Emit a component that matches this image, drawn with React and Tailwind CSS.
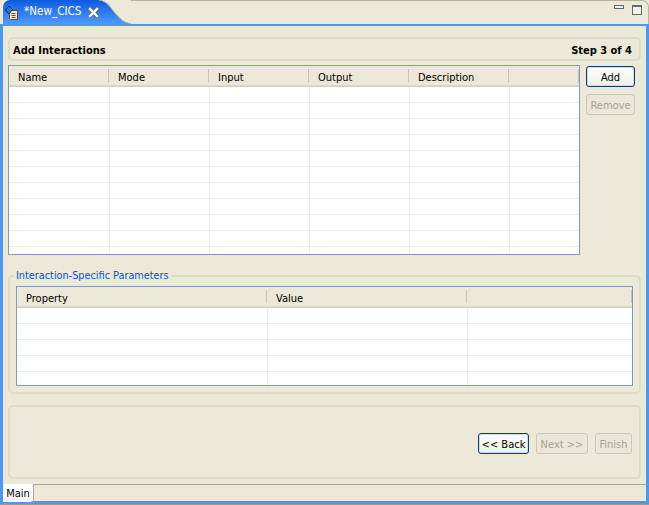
import React from "react";

const font = { fontFamily: '"DejaVu Sans Condensed", "DejaVu Sans", sans-serif' };

const Grid = ({ columns, rows, widths, className, headPad }) => (
  <div className={`flex flex-col overflow-hidden border border-[#7f9db9] bg-white ${className}`}>
    <div className="flex h-[19px] shrink-0 bg-[#ebe8d8]">
      {columns.map((c, i) => (
        <div key={i} className={`relative flex shrink-0 items-center pl-[9px] ${headPad} ${widths[i]}`}>
          {c}
          <span className="absolute right-0 top-[3px] h-[13px] w-px bg-[#c7c5b2]" />
        </div>
      ))}
    </div>
    <div className="h-px shrink-0 bg-[#dcd9c9]" />
    <div className="h-px shrink-0 bg-[#d3d0bf]" />
    {rows.map((r) => (
      <div key={r} className="flex h-[16px] shrink-0 border-b border-[#f1efe2] pl-px">
        {columns.map((c, i) => (
          <div key={i} className={`shrink-0 border-r border-[#f1efe2] ${widths[i]}`} />
        ))}
      </div>
    ))}
  </div>
);

const Btn = ({ children, w, focus, disabled }) => (
  <button
    className={`flex h-[21px] items-center justify-center rounded-[3px] border pt-px ${w} ${
      focus
        ? "border-[#0f3d6e] bg-gradient-to-b from-white to-[#f0efe6] text-black shadow-[inset_0_0_0_1px_#cfdcf0]"
        : ""
    } ${disabled ? "border-[#cac8bb] bg-[#eae7d8] text-[#a5a396]" : ""}`}
  >
    {children}
  </button>
);

const TabIcon = () => (
  <svg width="16" height="17" viewBox="0 0 16 17" className="shrink-0">
    <path d="M4.5 6.5 H12.5 V15.5 H5.5 L4.5 14.5 Z" fill="#f9ecc4" stroke="#6b4a22" />
    <path d="M6.5 9.5 H10.5 M6.5 11.5 H10.5 M6.5 13.5 H10.5" stroke="#6b4a22" />
    <path d="M0.5 6 L4 2 L7.5 5.5 L4 10 Z" fill="#1f7fc4" stroke="#0b2f5a" />
  </svg>
);

const CloseIcon = () => (
  <svg width="11" height="11" viewBox="0 0 11 11" className="shrink-0">
    <path d="M2 2 L9 9 M9 2 L2 9" stroke="#5a6878" strokeWidth="4" strokeLinecap="square" />
    <path d="M2 2 L9 9 M9 2 L2 9" stroke="#fff" strokeWidth="2.4" strokeLinecap="square" />
  </svg>
);

export default function App() {
  const widths1 = ["w-[100px]", "w-[100px]", "w-[100px]", "w-[100px]", "w-[100px]", "w-[70px]"];
  const widths2 = ["w-[250px]", "w-[200px]", "w-[165px]"];

  return (
    <div style={font} className="flex h-[505px] w-[649px] flex-col overflow-hidden bg-[#ece9d8] text-[11px] leading-none text-black">
      {/* tab strip */}
      <div className="flex h-[24px] shrink-0 pl-[3px]">
        <div className="flex h-full w-[96px] shrink-0 items-center rounded-tl-[7px] bg-gradient-to-b from-[#0a5be0] to-[#4d9bff] pl-[2px] text-white">
          <TabIcon />
          <span className="ml-[3px] text-[11.6px]">*New_CICS</span>
          <span className="ml-[7px] flex"><CloseIcon /></span>
        </div>
        <svg width="32" height="24" viewBox="0 0 32 24" className="shrink-0">
          <defs>
            <linearGradient id="tabfill" x1="0" y1="0" x2="0" y2="1">
              <stop offset="0" stopColor="#0a5be0" />
              <stop offset="1" stopColor="#4d9bff" />
            </linearGradient>
          </defs>
          <path d="M0 0 C6 1 9 4 12 8 C16 13 19 17 23 20 C25 22 28 23 32 23.5 L32 24 L0 24 Z" fill="url(#tabfill)" />
          <path d="M0 0 C6 1 9 4 12 8 C16 13 19 17 23 20 C25 22 28 23 32 23.5" fill="none" stroke="#b5b2a2" />
        </svg>
        <div className="relative flex flex-1 items-start justify-end gap-[8px] rounded-tr-[7px] border-r border-t border-[#b5b2a2] pr-[6px] pt-[4px]">
          <span className="h-[4px] w-[10px] border border-[#5e6a7a] bg-[#f4f2e8]" />
          <span className="h-[10px] w-[10px] border border-[#5e6a7a] border-t-2 bg-[#f4f2e8]" />
        </div>
      </div>

      {/* editor frame */}
      <div className="flex min-h-0 flex-1 flex-col border-[3px] border-t-2 border-[#4b97f5]">
        <div className="flex flex-1 flex-col px-[5px] pt-[11px]">
          <div className="flex h-[24px] shrink-0 items-center justify-between rounded-[5px] border-2 border-[#dedbc8] pl-[3px] pr-[7px] pt-[3px] font-bold">
            <span>Add Interactions</span>
            <span>Step 3 of 4</span>
          </div>

          <div className="mt-[4px] flex gap-[6px]">
            <Grid
              className="h-[190px] w-[572px]"
              headPad="pt-[3px]"
              columns={["Name", "Mode", "Input", "Output", "Description", ""]}
              widths={widths1}
              rows={[1, 2, 3, 4, 5, 6, 7, 8, 9, 10, 11]}
            />
            <div className="mt-px flex flex-col gap-[7px]">
              <Btn w="w-[49px]" focus>Add</Btn>
              <Btn w="w-[49px]" disabled>Remove</Btn>
            </div>
          </div>

          <div className="mt-[20px] h-[119px] shrink-0 rounded-[5px] border-2 border-[#dedbc8] px-[6px]">
            <div className="-ml-[2px] -mt-[6px] w-fit bg-[#ece9d8] px-[2px] text-[10.8px] text-[#0a50d8]">Interaction-Specific Parameters</div>
            <Grid
              className="mt-[4px] h-[100px] w-[617px]"
              headPad="pt-[5px]"
              columns={["Property", "Value", ""]}
              widths={widths2}
              rows={[1, 2, 3, 4, 5]}
            />
          </div>

          <div className="mt-[11px] flex h-[74px] shrink-0 items-end justify-end gap-[7px] rounded-[5px] border-2 border-[#dedbc8] pb-[23px] pr-[7px]">
            <Btn w="w-[51px]" focus>{"<< Back"}</Btn>
            <Btn w="w-[52px]" disabled>{"Next >>"}</Btn>
            <Btn w="w-[37px]" disabled>Finish</Btn>
          </div>
        </div>

        <div className="mt-[5px] flex h-[18px] shrink-0 items-stretch">
          <div className="flex w-[30px] items-center justify-center rounded-br-[3px] bg-white">Main</div>
          <div className="flex-1 border-l border-t border-[#aca899]" />
        </div>
      </div>
      <div className="h-px shrink-0 bg-[#9c9a8c]" />
    </div>
  );
}
